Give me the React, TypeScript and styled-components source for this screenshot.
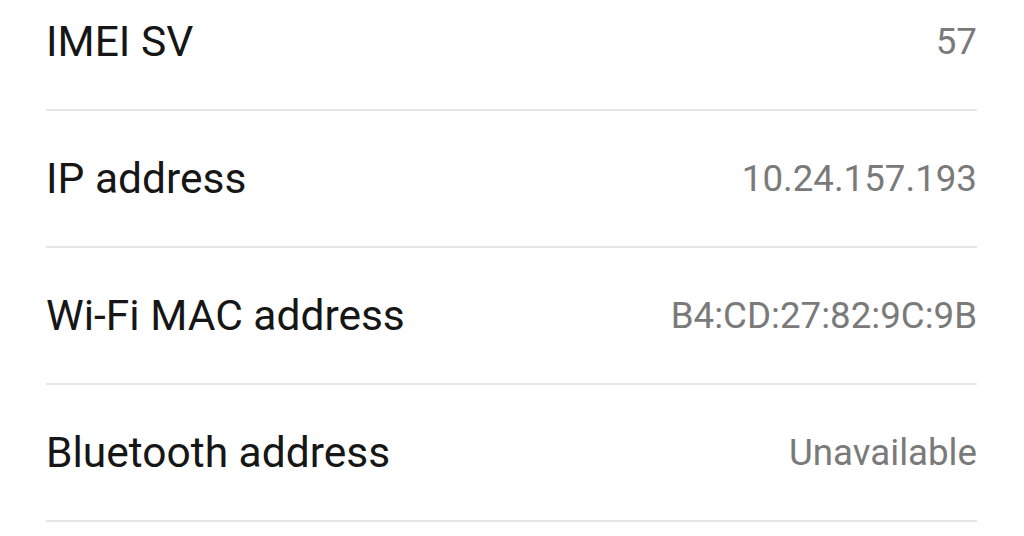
import React from "react";
import styled, { createGlobalStyle } from "styled-components";

const Global = createGlobalStyle`
  html, body { margin: 0; padding: 0; background: #ffffff; }
  body { width: 1024px; height: 536px; overflow: hidden; font-family: Roboto, "Noto Sans", sans-serif; }
`;

const Screen = styled.div`
  width: 1024px;
  height: 536px;
  overflow: hidden;
  background: #ffffff;
`;

const List = styled.div`
  display: flex;
  flex-direction: column;
  margin-top: -26px;
  padding: 0 47px 0 46px;
`;

const Row = styled.div`
  display: flex;
  align-items: center;
  justify-content: space-between;
  height: 135px;
  border-bottom: 2px solid #e6e6e6;
`;

const Label = styled.span`
  font-size: 42.5px;
  color: #161616;
`;

const Value = styled.span`
  font-size: 36.7px;
  color: #7a7a7a;
`;

const rows = [
  ["IMEI SV", "57"],
  ["IP address", "10.24.157.193"],
  ["Wi-Fi MAC address", "B4:CD:27:82:9C:9B"],
  ["Bluetooth address", "Unavailable"],
];

export default function App() {
  return (
    <Screen>
      <Global />
      <List>
        {rows.map(([l, v]) => (
          <Row key={l}>
            <Label>{l}</Label>
            <Value>{v}</Value>
          </Row>
        ))}
      </List>
    </Screen>
  );
}
